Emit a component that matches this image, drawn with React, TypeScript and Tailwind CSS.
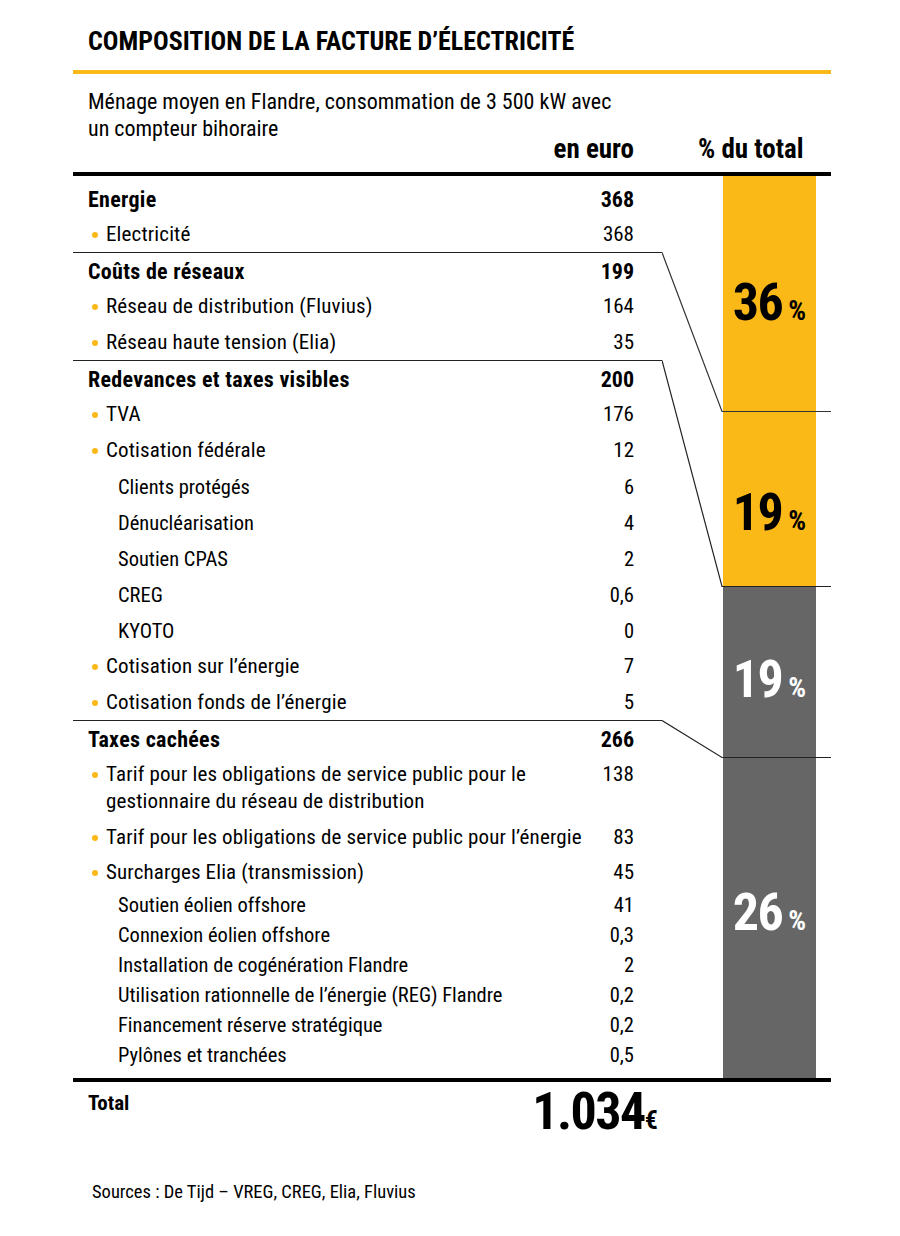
type Row = {
  label: string;
  value: string;
  kind: "head" | "bullet" | "sub";
  h: string;
  border?: boolean;
  wrap?: string;
};

const rows: Row[] = [
  { label: "Energie", value: "368", kind: "head", h: "h-[36px]" },
  { label: "Electricité", value: "368", kind: "bullet", h: "h-[36px]", border: true },
  { label: "Coûts de réseaux", value: "199", kind: "head", h: "h-[36px]" },
  { label: "Réseau de distribution (Fluvius)", value: "164", kind: "bullet", h: "h-[36px]" },
  { label: "Réseau haute tension (Elia)", value: "35", kind: "bullet", h: "h-[36px]", border: true },
  { label: "Redevances et taxes visibles", value: "200", kind: "head", h: "h-[36px]" },
  { label: "TVA", value: "176", kind: "bullet", h: "h-[36px]" },
  { label: "Cotisation fédérale", value: "12", kind: "bullet", h: "h-[36px]" },
  { label: "Clients protégés", value: "6", kind: "sub", h: "h-[36px]" },
  { label: "Dénucléarisation", value: "4", kind: "sub", h: "h-[36px]" },
  { label: "Soutien CPAS", value: "2", kind: "sub", h: "h-[36px]" },
  { label: "CREG", value: "0,6", kind: "sub", h: "h-[36px]" },
  { label: "KYOTO", value: "0", kind: "sub", h: "h-[36px]" },
  { label: "Cotisation sur l’énergie", value: "7", kind: "bullet", h: "h-[36px]" },
  { label: "Cotisation fonds de l’énergie", value: "5", kind: "bullet", h: "h-[36px]", border: true },
  { label: "Taxes cachées", value: "266", kind: "head", h: "h-[36px]" },
  {
    label: "Tarif pour les obligations de service public pour le",
    wrap: "gestionnaire du réseau de distribution",
    value: "138",
    kind: "bullet",
    h: "h-[63px]",
  },
  { label: "Tarif pour les obligations de service public pour l’énergie", value: "83", kind: "bullet", h: "h-[36px]" },
  { label: "Surcharges Elia (transmission)", value: "45", kind: "bullet", h: "h-[34px]" },
  { label: "Soutien éolien offshore", value: "41", kind: "sub", h: "h-[30px]" },
  { label: "Connexion éolien offshore", value: "0,3", kind: "sub", h: "h-[30px]" },
  { label: "Installation de cogénération Flandre", value: "2", kind: "sub", h: "h-[30px]" },
  { label: "Utilisation rationnelle de l’énergie (REG) Flandre", value: "0,2", kind: "sub", h: "h-[30px]" },
  { label: "Financement réserve stratégique", value: "0,2", kind: "sub", h: "h-[30px]" },
  { label: "Pylônes et tranchées", value: "0,5", kind: "sub", h: "h-[30px]" },
];

const TableRow = ({ row }: { row: Row }) => {
  if (row.wrap) {
    return (
      <div className={`${row.h} flex items-start justify-between pt-[4px] pr-[28px] pl-[19px] text-[21px] leading-[27px] tracking-[0.15px]`}>
        <div className="flex items-start">
          <span className="mt-[11px] w-[6px] h-[6px] rounded-full bg-[#fbb917]" />
          <span className="ml-[8px]">
            {row.label}
            <br />
            {row.wrap}
          </span>
        </div>
        <span>{row.value}</span>
      </div>
    );
  }
  const small = row.kind === "sub" && row.h === "h-[30px]";
  return (
    <div
      className={`${row.h} flex items-center justify-between pr-[28px] whitespace-nowrap ${
        row.border ? "border-b border-[#222]" : ""
      } ${
        row.kind === "head"
          ? "pl-[15px] font-bold text-[22px] tracking-[0.3px]"
          : row.kind === "bullet"
          ? "pl-[19px] text-[21px] tracking-[0.15px]"
          : small
          ? "pl-[45px] text-[20.5px]"
          : "pl-[45px] text-[20.5px]"
      }`}
    >
      <div className="flex items-center">
        {row.kind === "bullet" && <span className="w-[6px] h-[6px] rounded-full bg-[#fbb917]" />}
        <span className={row.kind === "bullet" ? "ml-[8px]" : ""}>{row.label}</span>
      </div>
      <span className="tracking-normal">{row.value}</span>
    </div>
  );
};

const Pct = ({ n, light }: { n: string; light?: boolean }) => (
  <div className={`h-[50px] flex items-baseline justify-center font-bold ${light ? "text-white" : "text-black"}`}>
    <span className="text-[52px] leading-[50px] tracking-[-1.5px]">{n}</span>
    <span className="ml-[6px] text-[28px] leading-[50px]">%</span>
  </div>
);

export default function App() {
  return (
    <div className="w-[900px] min-h-[1236px] bg-white text-black font-['Roboto_Condensed',sans-serif]">
      <div className="ml-[73px] w-[758px]">
        <h1 className="pt-[26px] pl-[15px] text-[26px] leading-[30px] font-bold uppercase">
          Composition de la facture d’électricité
        </h1>
        <div className="mt-[14px] h-[4px] bg-[#fbb917]" />

        <p className="mt-[14px] pl-[15px] text-[22px] leading-[27px]">
          Ménage moyen en Flandre, consommation de 3 500 kW avec
          <br />
          un compteur bihoraire
        </p>
        <div className="-mt-[7px] flex text-[27px] leading-[28px] font-bold">
          <div className="w-[561px] text-right">en euro</div>
          <div className="pl-[64px]">% du total</div>
        </div>
        <div className="mt-[9px] h-[4px] bg-black" />

        <div className="flex">
          <div className="w-[589px] pt-[5px] pb-[8px]">
            {rows.map((r) => (
              <TableRow key={r.label} row={r} />
            ))}
          </div>

          <div className="relative w-[169px]">
            <div className="ml-[61px] w-[93px] h-full flex flex-col">
              <div className="h-[235px] bg-[#fbb917] pt-[102px]">
                <Pct n="36" />
              </div>
              <div className="h-[175px] bg-[#fbb917] pt-[77px]">
                <Pct n="19" />
              </div>
              <div className="h-[171px] bg-[#666666] pt-[69px]">
                <Pct n="19" light />
              </div>
              <div className="flex-1 bg-[#666666] pt-[131px]">
                <Pct n="26" light />
              </div>
            </div>
            <svg className="absolute inset-0 w-full h-full" viewBox="0 0 169 902" preserveAspectRatio="none">
              <polyline points="0,76.5 60,235.5 169,235.5" fill="none" stroke="#333" strokeWidth="1.2" />
              <polyline points="0,184.5 60,410.5 169,410.5" fill="none" stroke="#222" strokeWidth="1.2" />
              <polyline points="0,544.5 60,581.5 169,581.5" fill="none" stroke="#222" strokeWidth="1.2" />
            </svg>
          </div>
        </div>

        <div className="h-[4px] bg-black" />
        <div className="h-[60px] flex">
          <div className="w-[585px] flex justify-between">
            <span className="mt-[9px] pl-[15px] text-[21px] leading-[24px] font-bold">Total</span>
            <span className="mt-[4px] flex items-baseline font-bold">
              <span className="text-[52px] leading-[52px] tracking-[-1.5px]">1.034</span>
              <span className="text-[26px] leading-[52px]">€</span>
            </span>
          </div>
        </div>
        <p className="mt-[38px] pl-[19px] text-[18.5px] leading-[24px]">
          Sources : De Tijd – VREG, CREG, Elia, Fluvius
        </p>
      </div>
    </div>
  );
}
